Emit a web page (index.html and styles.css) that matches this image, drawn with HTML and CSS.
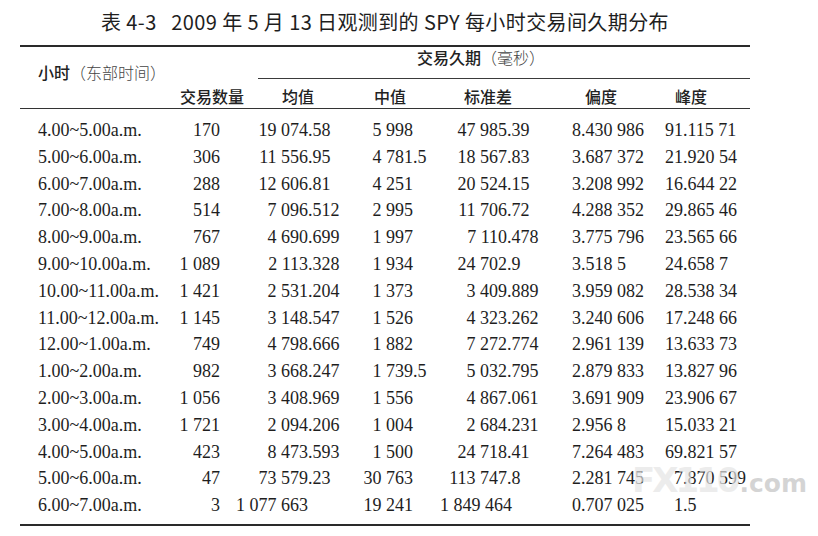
FILE: index.html
```html
<!DOCTYPE html>
<html lang="zh">
<head>
<meta charset="utf-8">
<title>表 4-3</title>
<link rel="stylesheet" href="styles.css">
</head>
<body>
<div class="page">
  <h1 class="title">表 4-3   2009 年 5 月 13 日观测到的 SPY 每小时交易间久期分布</h1>
  <div class="table">
    <div class="hrow1">
      <div class="hour-label">小时<span class="lt">（东部时间）</span></div>
      <div class="group"><span class="group-text">交易久期<span class="lt">（毫秒）</span></span></div>
    </div>
    <div class="hrow2">
      <div></div>
      <div>交易数量</div>
      <div>均值</div>
      <div>中值</div>
      <div>标准差</div>
      <div>偏度</div>
      <div>峰度</div>
      <div></div>
    </div>
    <div class="tbody">
      <div class="row"><div class="hour">4.00~5.00a.m.</div><div class="cnt">170</div><div class="mean"><span class="i">19 074</span>.58</div><div class="med"><span class="i">5 998</span></div><div class="std"><span class="i">47 985</span>.39</div><div class="skew"><span class="i">8</span>.430 986</div><div class="kurt"><span class="i">91</span>.115 71</div></div>
      <div class="row"><div class="hour">5.00~6.00a.m.</div><div class="cnt">306</div><div class="mean"><span class="i">11 556</span>.95</div><div class="med"><span class="i">4 781</span>.5</div><div class="std"><span class="i">18 567</span>.83</div><div class="skew"><span class="i">3</span>.687 372</div><div class="kurt"><span class="i">21</span>.920 54</div></div>
      <div class="row"><div class="hour">6.00~7.00a.m.</div><div class="cnt">288</div><div class="mean"><span class="i">12 606</span>.81</div><div class="med"><span class="i">4 251</span></div><div class="std"><span class="i">20 524</span>.15</div><div class="skew"><span class="i">3</span>.208 992</div><div class="kurt"><span class="i">16</span>.644 22</div></div>
      <div class="row"><div class="hour">7.00~8.00a.m.</div><div class="cnt">514</div><div class="mean"><span class="i">7 096</span>.512</div><div class="med"><span class="i">2 995</span></div><div class="std"><span class="i">11 706</span>.72</div><div class="skew"><span class="i">4</span>.288 352</div><div class="kurt"><span class="i">29</span>.865 46</div></div>
      <div class="row"><div class="hour">8.00~9.00a.m.</div><div class="cnt">767</div><div class="mean"><span class="i">4 690</span>.699</div><div class="med"><span class="i">1 997</span></div><div class="std"><span class="i">7 110</span>.478</div><div class="skew"><span class="i">3</span>.775 796</div><div class="kurt"><span class="i">23</span>.565 66</div></div>
      <div class="row"><div class="hour">9.00~10.00a.m.</div><div class="cnt">1 089</div><div class="mean"><span class="i">2 113</span>.328</div><div class="med"><span class="i">1 934</span></div><div class="std"><span class="i">24 702</span>.9</div><div class="skew"><span class="i">3</span>.518 5</div><div class="kurt"><span class="i">24</span>.658 7</div></div>
      <div class="row"><div class="hour">10.00~11.00a.m.</div><div class="cnt">1 421</div><div class="mean"><span class="i">2 531</span>.204</div><div class="med"><span class="i">1 373</span></div><div class="std"><span class="i">3 409</span>.889</div><div class="skew"><span class="i">3</span>.959 082</div><div class="kurt"><span class="i">28</span>.538 34</div></div>
      <div class="row"><div class="hour">11.00~12.00a.m.</div><div class="cnt">1 145</div><div class="mean"><span class="i">3 148</span>.547</div><div class="med"><span class="i">1 526</span></div><div class="std"><span class="i">4 323</span>.262</div><div class="skew"><span class="i">3</span>.240 606</div><div class="kurt"><span class="i">17</span>.248 66</div></div>
      <div class="row"><div class="hour">12.00~1.00a.m.</div><div class="cnt">749</div><div class="mean"><span class="i">4 798</span>.666</div><div class="med"><span class="i">1 882</span></div><div class="std"><span class="i">7 272</span>.774</div><div class="skew"><span class="i">2</span>.961 139</div><div class="kurt"><span class="i">13</span>.633 73</div></div>
      <div class="row"><div class="hour">1.00~2.00a.m.</div><div class="cnt">982</div><div class="mean"><span class="i">3 668</span>.247</div><div class="med"><span class="i">1 739</span>.5</div><div class="std"><span class="i">5 032</span>.795</div><div class="skew"><span class="i">2</span>.879 833</div><div class="kurt"><span class="i">13</span>.827 96</div></div>
      <div class="row"><div class="hour">2.00~3.00a.m.</div><div class="cnt">1 056</div><div class="mean"><span class="i">3 408</span>.969</div><div class="med"><span class="i">1 556</span></div><div class="std"><span class="i">4 867</span>.061</div><div class="skew"><span class="i">3</span>.691 909</div><div class="kurt"><span class="i">23</span>.906 67</div></div>
      <div class="row"><div class="hour">3.00~4.00a.m.</div><div class="cnt">1 721</div><div class="mean"><span class="i">2 094</span>.206</div><div class="med"><span class="i">1 004</span></div><div class="std"><span class="i">2 684</span>.231</div><div class="skew"><span class="i">2</span>.956 8</div><div class="kurt"><span class="i">15</span>.033 21</div></div>
      <div class="row"><div class="hour">4.00~5.00a.m.</div><div class="cnt">423</div><div class="mean"><span class="i">8 473</span>.593</div><div class="med"><span class="i">1 500</span></div><div class="std"><span class="i">24 718</span>.41</div><div class="skew"><span class="i">7</span>.264 483</div><div class="kurt"><span class="i">69</span>.821 57</div></div>
      <div class="row"><div class="hour">5.00~6.00a.m.</div><div class="cnt">47</div><div class="mean"><span class="i">73 579</span>.23</div><div class="med"><span class="i">30 763</span></div><div class="std"><span class="i">113 747</span>.8</div><div class="skew"><span class="i">2</span>.281 745</div><div class="kurt"><span class="i">7</span>.870 599</div></div>
      <div class="row"><div class="hour">6.00~7.00a.m.</div><div class="cnt">3</div><div class="mean"><span class="i">1 077 663</span></div><div class="med"><span class="i">19 241</span></div><div class="std"><span class="i">1 849 464</span></div><div class="skew"><span class="i">0</span>.707 025</div><div class="kurt"><span class="i">1</span>.5</div></div>
    </div>
  </div>
  <div class="watermark"><span class="wm-main">FX110</span><span class="wm-dom">.com</span></div>
</div>
</body>
</html>
```

FILE: styles.css
```css
html, body {
  margin: 0;
  padding: 0;
  background: #ffffff;
}

.page {
  position: relative;
  width: 818px;
  height: 536px;
  overflow: hidden;
  color: #1e1e1e;
}

.title {
  margin: 0 0 0 20px;
  width: 730px;
  padding-top: 11px;
  height: 22px;
  line-height: 22px;
  text-align: center;
  font-family: "Liberation Sans Narrow", "Noto Sans CJK SC", sans-serif;
  font-size: 20px;
  font-weight: 400;
  letter-spacing: 0.4px;
  color: #1e1e1e;
  white-space: pre;
}

.table {
  margin: 12px 0 0 20px;
  width: 730px;
  border-top: 2.5px solid #2a2a2a;
  border-bottom: 2.5px solid #2a2a2a;
}

.hrow1 {
  display: flex;
  height: 32px;
  font-family: "Noto Sans CJK SC", sans-serif;
  font-size: 16px;
  font-weight: 500;
  color: #222;
}

.hour-label {
  width: 238px;
  padding: 16px 0 0 18px;
  line-height: 18px;
  box-sizing: border-box;
}

.lt {
  font-weight: 300;
  color: #444;
}

.group {
  flex: 1;
  border-bottom: 1px solid #3a3a3a;
  padding: 1px 46px 0 0;
  line-height: 18px;
  text-align: center;
}

.hrow2 {
  display: grid;
  grid-template-columns: 152px 80px 92px 92px 104px 122px 58px 30px;
  height: 30px;
  padding-top: 8px;
  box-sizing: border-box;
  border-bottom: 1.5px solid #333;
  font-family: "Noto Sans CJK SC", sans-serif;
  font-size: 16px;
  font-weight: 500;
  line-height: 18px;
  text-align: center;
  color: #222;
}

.tbody {
  padding: 8px 0 5px;
  font-family: "Liberation Serif", "Times New Roman", serif;
  font-size: 18px;
  color: #1e1e1e;
}

.row {
  display: grid;
  grid-template-columns: 148px 60px 122px 90px 120px 100px 90px;
  height: 26.8px;
  line-height: 26.8px;
  white-space: pre;
}

.hour {
  padding-left: 18px;
}

.cnt {
  text-align: right;
  padding-right: 8px;
}

.i {
  display: inline-block;
  text-align: right;
}

.mean .i { width: 80px; }
.med .i { width: 63px; }
.std .i { width: 67px; }
.skew .i { width: 21px; }
.kurt .i { width: 23px; }

.watermark {
  position: absolute;
  left: 632px;
  top: 462px;
  font-family: "DejaVu Sans", "Liberation Sans", sans-serif;
  font-weight: 700;
  line-height: 36px;
  white-space: nowrap;
}

.wm-main {
  font-size: 34px;
  letter-spacing: -3px;
  color: rgba(228, 228, 228, 0.7);
}

.wm-dom {
  font-size: 25px;
  margin-left: 2px;
  color: rgba(205, 205, 205, 0.85);
}
```
